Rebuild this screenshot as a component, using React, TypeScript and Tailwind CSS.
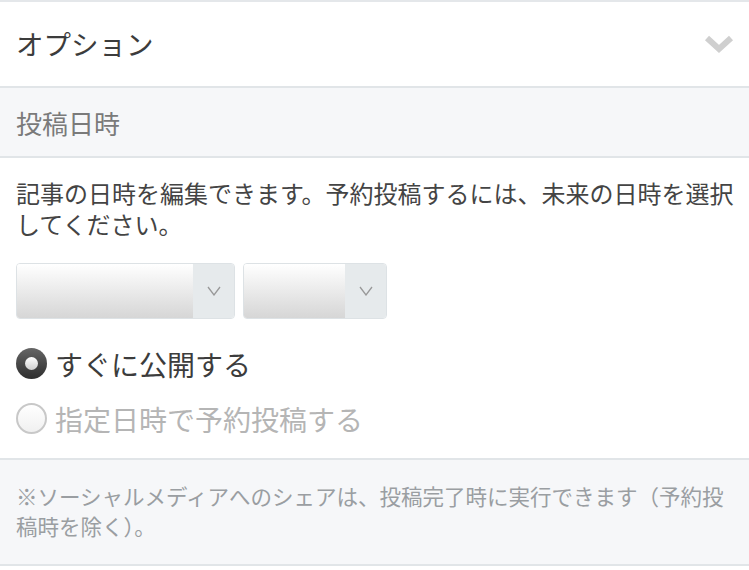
export default function App() {
  const font = { fontFamily: '"Noto Sans CJK JP", "Noto Sans", sans-serif' }
  return (
    <div className="w-[749px] h-[570px] bg-white overflow-hidden" style={font}>
      <div className="h-[2px] bg-[#e4e7ea]" />
      <div className="h-[86px] flex items-center justify-between pl-4 pr-[14px] border-b-2 border-[#e1e5e8]">
        <span className="text-[27.5px] text-[#3c3c3c]">オプション</span>
        <svg width="32" height="20" viewBox="0 0 32 20">
          <path d="M4 4 L16 15 L28 4" fill="none" stroke="#cfcfcf" strokeWidth="6" />
        </svg>
      </div>
      <div className="h-[70px] flex items-center pl-4 bg-[#f6f7f9] border-b-2 border-[#e1e5e8]">
        <span className="text-[26px] text-[#7a7a7a]">投稿日時</span>
      </div>
      <div className="pl-4 pr-3 pt-[19px]">
        <p className="text-[24px] leading-[31px] text-[#444]">
          記事の日時を編集できます。予約投稿するには、未来の日時を選択してください。
        </p>
        <div className="flex gap-2 mt-[24px]">
          <div className="w-[219px] h-[56px] flex rounded-[4px] border border-[#dde2e5] overflow-hidden">
            <div className="flex-1 bg-gradient-to-b from-white to-[#d6d6d6]" />
            <div className="w-[41px] bg-[#e6eaec] flex items-center justify-center">
              <svg width="14" height="10" viewBox="0 0 14 10">
                <path d="M1 1 L7 9 L13 1" fill="none" stroke="#999" strokeWidth="1.3" />
              </svg>
            </div>
          </div>
          <div className="w-[144px] h-[56px] flex rounded-[4px] border border-[#dde2e5] overflow-hidden">
            <div className="flex-1 bg-gradient-to-b from-white to-[#d6d6d6]" />
            <div className="w-[41px] bg-[#e6eaec] flex items-center justify-center">
              <svg width="14" height="10" viewBox="0 0 14 10">
                <path d="M1 1 L7 9 L13 1" fill="none" stroke="#999" strokeWidth="1.3" />
              </svg>
            </div>
          </div>
        </div>
        <div className="mt-[27px] flex flex-col gap-[20px] pb-[22px]">
          <label className="flex items-center gap-[8px] h-[35px]">
            <span className="w-[31px] h-[31px] rounded-full bg-gradient-to-b from-[#666] to-[#2e2e2e] flex items-center justify-center">
              <span className="w-[13px] h-[13px] rounded-full bg-gradient-to-b from-white to-[#cfcfcf]" />
            </span>
            <span className="text-[28px] text-[#3c3c3c]">すぐに公開する</span>
          </label>
          <label className="flex items-center gap-[8px] h-[35px]">
            <span className="w-[31px] h-[31px] rounded-full border-2 border-[#c8c8c8] bg-gradient-to-b from-white to-[#f0f0f0]" />
            <span className="text-[28px] text-[#b5b5b5]">指定日時で予約投稿する</span>
          </label>
        </div>
      </div>
      <div className="border-t-2 border-b-2 border-[#e1e5e8] bg-[#f6f7f9] pl-4 pr-5 pt-[21px] pb-[23px]">
        <p className="text-[21.5px] leading-[30px] text-[#9a9ea2]">
          ※ソーシャルメディアへのシェアは、投稿完了時に実行できます（予約投稿時を除く）。
        </p>
      </div>
    </div>
  )
}
